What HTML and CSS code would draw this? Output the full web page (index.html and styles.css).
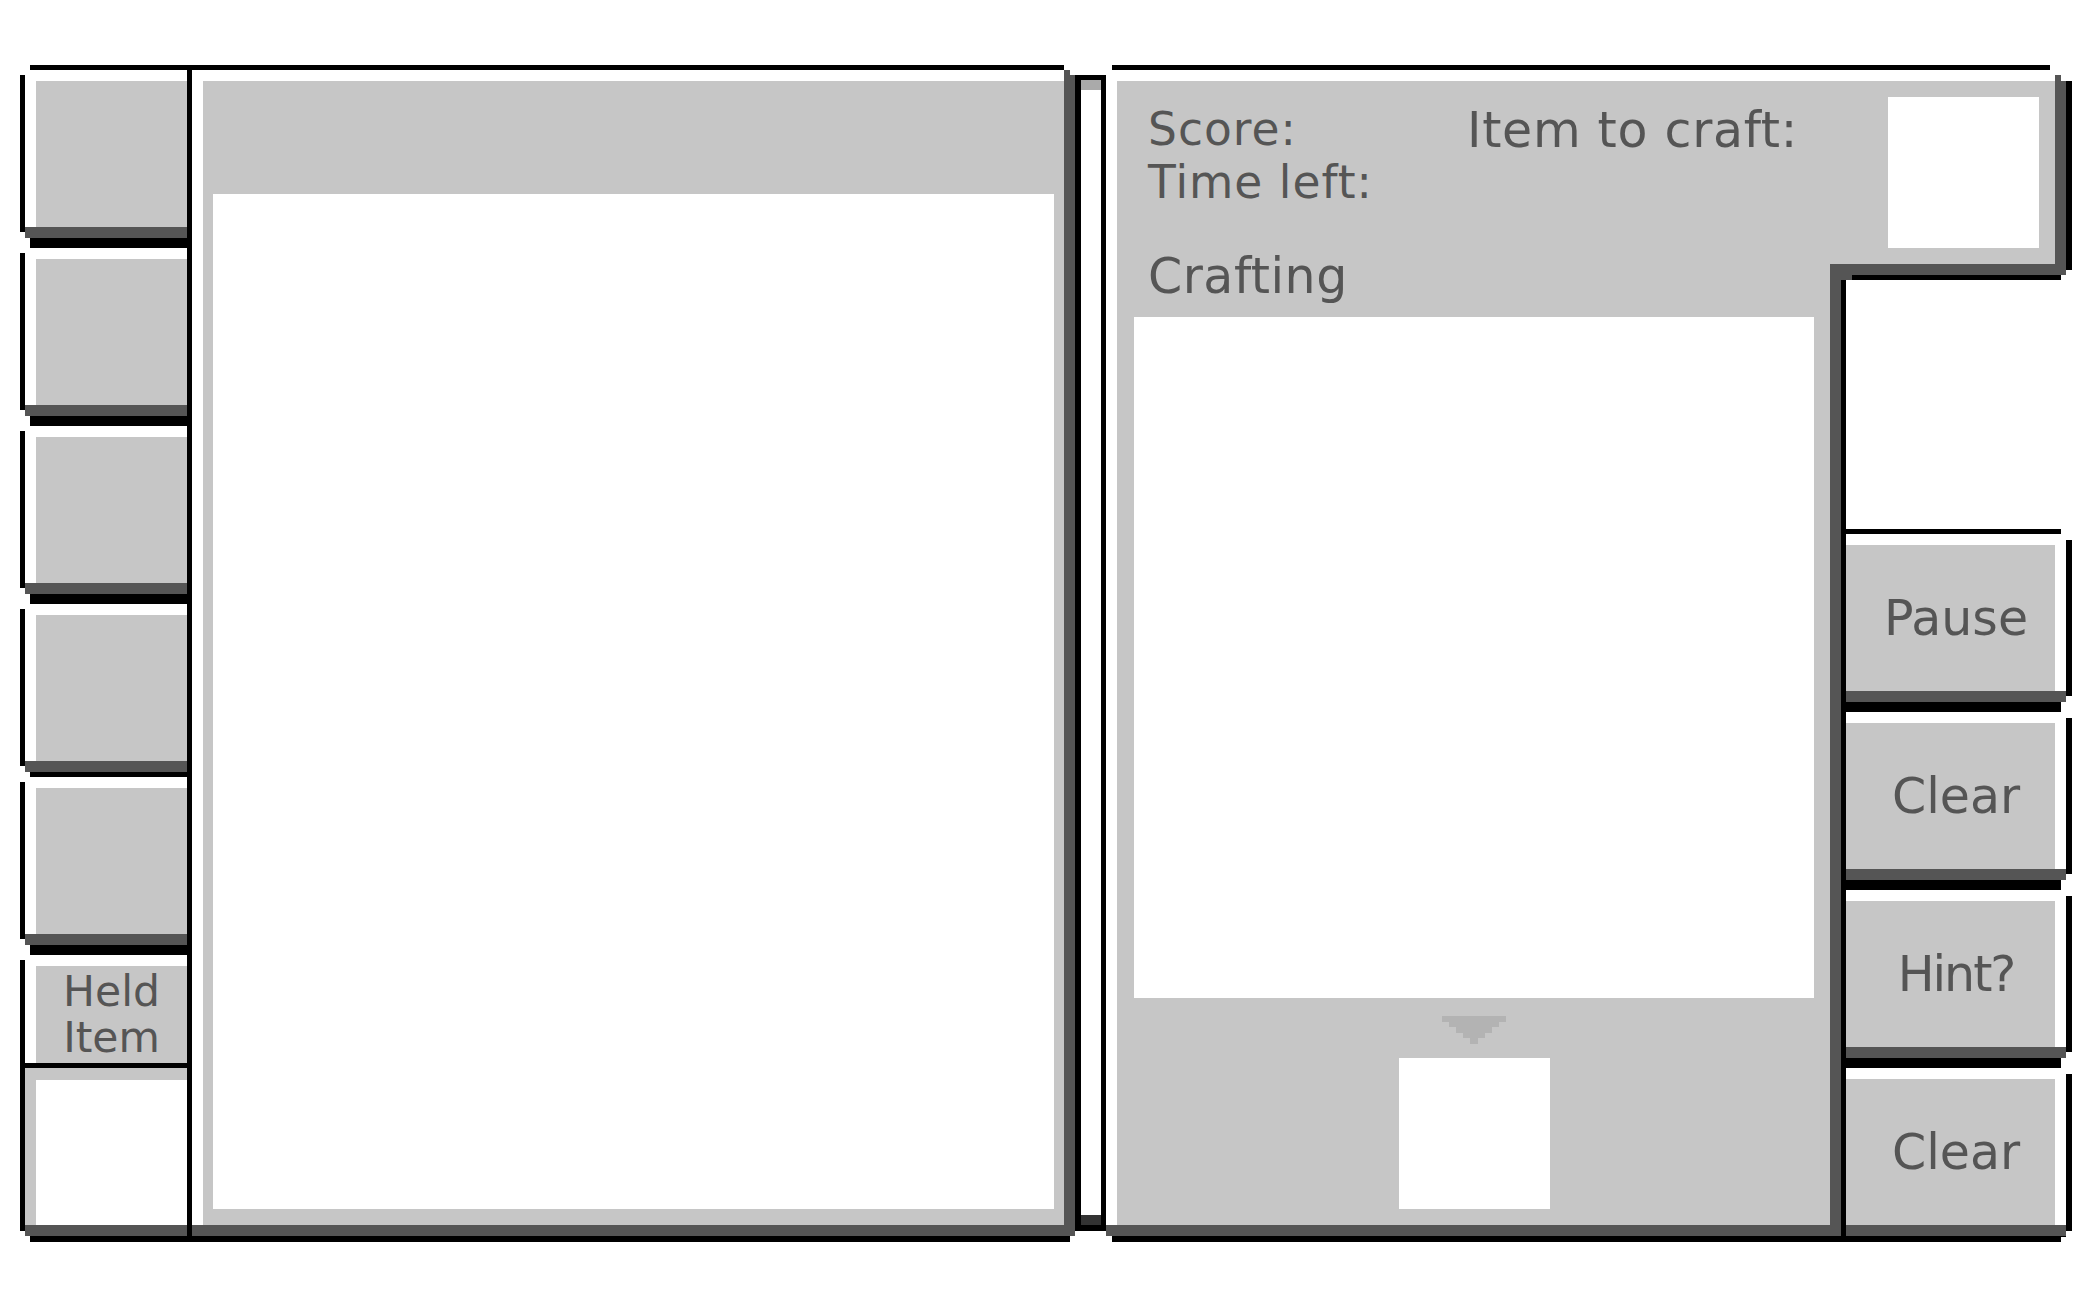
FILE: index.html
```html
<!DOCTYPE html>
<html lang="en">
<head>
<meta charset="utf-8">
<title>Crafting</title>
<link rel="stylesheet" href="styles.css">
</head>
<body>
<div class="gui">
  <div class="tabs">
    <div class="tab"></div>
    <div class="tab"></div>
    <div class="tab"></div>
    <div class="tab"></div>
    <div class="tab tab-last"></div>
    <div class="held">
      <div class="held-label">Held<br>Item</div>
      <div class="held-slot"></div>
    </div>
  </div>

  <div class="book">
    <div class="book-page"></div>
  </div>

  <div class="divider"></div>

  <div class="craft">
    <div class="craft-top">
      <div class="stats">Score:<br>Time left:</div>
      <div class="target-label">Item to craft:</div>
      <div class="slot target-slot"></div>
    </div>
    <div class="craft-row">
      <div class="craft-body">
        <div class="craft-title">Crafting</div>
        <div class="grid"></div>
        <svg class="arrow" width="64" height="28" viewBox="0 0 64 28">
          <path d="M0 0H64V6H57V11H50V17H43V22H36V28H28V22H21V17H14V11H7V6H0Z" fill="#b3b3b3"/>
        </svg>
        <div class="slot result-slot"></div>
      </div>
      <div class="side">
        <div class="ext-foot"></div>
        <div class="actions">
          <div class="btn">Pause</div>
          <div class="btn">Clear</div>
          <div class="btn btn-hint">Hint?</div>
          <div class="btn btn-last">Clear</div>
        </div>
      </div>
    </div>
  </div>
</div>
</body>
</html>
```

FILE: styles.css
```css
* {
  box-sizing: border-box;
}

html,
body {
  margin: 0;
  background: #ffffff;
}

body {
  font-family: "DejaVu Sans", "Liberation Sans", sans-serif;
  color: #555555;
}

.gui {
  display: flex;
  align-items: flex-start;
  padding: 65px 0 0 20px;
}

/* ---------- left tabs ---------- */
.tabs {
  width: 167px;
  display: flex;
  flex-direction: column;
}

.tab {
  height: 178px;
  border: 5px solid #000;
  border-right: 0;
  background: #c6c6c6;
  box-shadow: inset 0 -11px 0 #555555, inset 11px 11px 0 #ffffff;
  clip-path: polygon(10px 0, 100% 0, 100% 100%, 10px 100%, 10px calc(100% - 5px), 5px calc(100% - 5px), 5px calc(100% - 11px), 0 calc(100% - 11px), 0 10px, 5px 10px, 5px 5px, 10px 5px);
}

.tab-last {
  height: 173px;
  border-top: 0;
  clip-path: polygon(5px 0, 100% 0, 100% 100%, 10px 100%, 10px calc(100% - 5px), 5px calc(100% - 5px), 5px calc(100% - 11px), 0 calc(100% - 11px), 0 5px, 5px 5px);
}

.held {
  height: 292px;
  border: 5px solid #000;
  border-right: 0;
  border-bottom-width: 6px;
  display: flex;
  flex-direction: column;
  clip-path: polygon(10px 0, 100% 0, 100% 100%, 10px 100%, 10px calc(100% - 6px), 5px calc(100% - 6px), 5px calc(100% - 11px), 0 calc(100% - 11px), 0 10px, 5px 10px, 5px 5px, 10px 5px);
}

.held-label {
  height: 108px;
  padding: 14px 0 0 11px;
  background: #c6c6c6;
  box-shadow: inset 11px 11px 0 #ffffff;
  text-align: center;
  font-size: 42.5px;
  line-height: 46px;
  white-space: nowrap;
}

.held-slot {
  flex: 1;
  border-top: 5px solid #000;
  background: #ffffff;
  box-shadow: inset 0 -11px 0 #555555, inset 11px 12px 0 #c6c6c6;
}

/* ---------- book panel ---------- */
.book {
  width: 894px;
  height: 1177px;
  border: 5px solid #000;
  border-right-width: 6px;
  border-bottom-width: 6px;
  background: #c6c6c6;
  box-shadow: inset -11px -11px 0 #555555, inset 11px 11px 0 #ffffff;
  padding: 124px 21px 27px 21px;
  display: flex;
  clip-path: polygon(0 0, calc(100% - 17px) 0, calc(100% - 17px) 5px, calc(100% - 11px) 5px, calc(100% - 11px) 10px, 100% 10px, 100% calc(100% - 11px), calc(100% - 6px) calc(100% - 11px), calc(100% - 6px) calc(100% - 6px), calc(100% - 11px) calc(100% - 6px), calc(100% - 11px) 100%, 0 100%);
}

.book-page {
  flex: 1;
  background: #ffffff;
}

/* ---------- divider slot ---------- */
.divider {
  width: 20px;
  height: 1156px;
  margin-top: 10px;
  background: #ffffff;
  border-top: 5px solid #000;
  border-bottom: 6px solid #000;
  box-shadow: inset 0 10px 0 #aaaaaa, inset 0 -10px 0 #333333;
}

/* ---------- crafting panel ---------- */
.craft {
  width: 971px;
}

.craft-top {
  height: 199px;
  border: 5px solid #000;
  border-bottom: 0;
  border-right-width: 6px;
  background: #c6c6c6;
  box-shadow: inset -11px 0 0 #555555, inset 11px 11px 0 #ffffff;
  padding: 0 27px 0 42px;
  display: flex;
  align-items: flex-start;
  font-size: 49px;
  line-height: 51px;
  white-space: nowrap;
  clip-path: polygon(11px 0, calc(100% - 22px) 0, calc(100% - 22px) 5px, calc(100% - 17px) 5px, calc(100% - 17px) 10px, calc(100% - 11px) 10px, calc(100% - 11px) 16px, 100% 16px, 100% 100%, 0 100%, 0 10px, 5px 10px, 5px 5px, 11px 5px);
}

.stats {
  width: 319px;
  margin-top: 33px;
  font-size: 45.5px;
  line-height: 53px;
  letter-spacing: 1px;
}

.target-label {
  width: 421px;
  margin-top: 35px;
  letter-spacing: 0.7px;
}

.slot {
  width: 151px;
  height: 151px;
  background: #ffffff;
  flex: none;
}

.target-slot {
  margin-top: 27px;
}

.craft-row {
  display: flex;
  align-items: flex-start;
}

.craft-body {
  width: 745px;
  height: 978px;
  border: 5px solid #000;
  border-top: 0;
  border-bottom-width: 6px;
  background: #c6c6c6;
  box-shadow: inset -11px -11px 0 #555555, inset 11px 0 0 #ffffff;
  padding: 0 27px 0 28px;
  display: flex;
  flex-direction: column;
  align-items: center;
  clip-path: polygon(0 -40px, 100% -40px, 100% 100%, 11px 100%, 11px calc(100% - 6px), 5px calc(100% - 6px), 5px calc(100% - 11px), 0 calc(100% - 11px));
}

.craft-title {
  align-self: flex-start;
  margin: -13px 0 0 14px;
  font-size: 49px;
  line-height: 51px;
  white-space: nowrap;
  letter-spacing: 0.5px;
}

.grid {
  width: 680px;
  height: 681px;
  margin-top: 15px;
  background: #ffffff;
  flex: none;
}

.arrow {
  display: block;
  margin-top: 18px;
  flex: none;
}

.result-slot {
  margin-top: 14px;
}

/* ---------- right buttons ---------- */
.side {
  width: 242px;
  margin-left: -16px;
}

.ext-foot {
  height: 16px;
  border-right: 6px solid #000;
  background: linear-gradient(#000000, #000000) no-repeat right bottom / calc(100% - 22px) 5px, #555555;
  clip-path: polygon(0 0, 100% 0, 100% 6px, calc(100% - 6px) 6px, calc(100% - 6px) 11px, calc(100% - 11px) 11px, calc(100% - 11px) 100%, 0 100%);
}

.actions {
  margin: 249px 0 0 16px;
}

.btn {
  height: 178px;
  border-top: 5px solid #000;
  border-right: 6px solid #000;
  border-bottom: 5px solid #000;
  background: #c6c6c6;
  box-shadow: inset 0 -11px 0 #555555, inset -11px 11px 0 #ffffff;
  display: flex;
  align-items: center;
  justify-content: center;
  font-size: 49px;
  line-height: 51px;
  white-space: nowrap;
  clip-path: polygon(0 0, calc(100% - 11px) 0, calc(100% - 11px) 5px, calc(100% - 6px) 5px, calc(100% - 6px) 11px, 100% 11px, 100% calc(100% - 11px), calc(100% - 6px) calc(100% - 11px), calc(100% - 6px) calc(100% - 5px), calc(100% - 11px) calc(100% - 5px), calc(100% - 11px) 100%, 0 100%);
}

.btn-hint {
  letter-spacing: -2px;
}

.btn-last {
  height: 179px;
  border-bottom-width: 6px;
}
```
